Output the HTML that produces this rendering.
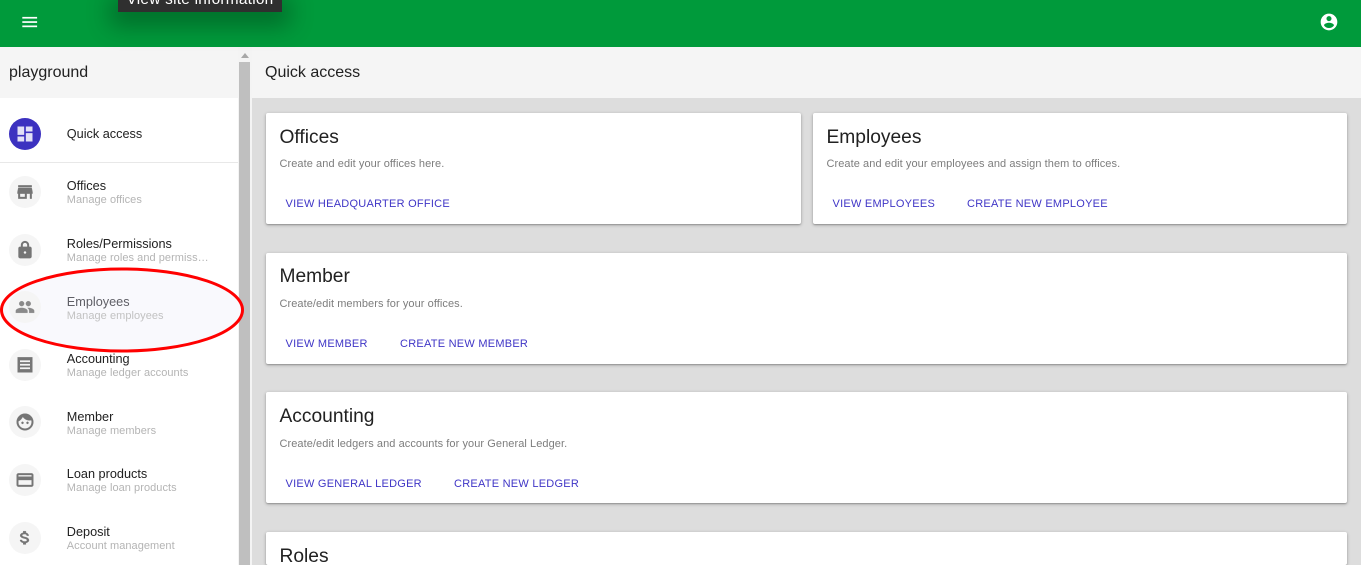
<!DOCTYPE html>
<html><head><meta charset="utf-8"><style>
*{box-sizing:border-box}
html,body{margin:0;padding:0;width:1361px;height:565px;overflow:hidden;background:#ddd;font-family:"Liberation Sans",sans-serif;color:#212121}
#root{position:absolute;left:0;top:0;width:1361px;height:565px;overflow:hidden;background:#ddd}
.abs{position:absolute}
.hdr{left:0;top:0;width:1361px;height:47px;background:#009a3b}
.tip{left:118px;top:0;width:164px;height:12px;background:#2f2f2f;box-shadow:0 6px 24px 8px rgba(0,0,0,.3);z-index:5;overflow:hidden}
.tip span{position:absolute;left:0;top:-13px;width:164px;color:#fff;font-size:15.4px;line-height:25px;text-align:center;letter-spacing:.25px;white-space:nowrap}
.side{left:0;top:47px;width:238px;height:518px;background:#fff}
.sh{left:0;top:47px;width:238px;height:51px;background:#f5f5f5;font-size:16px;line-height:51px;padding-left:9px}
.track{left:238px;top:47px;width:14px;height:518px;background:#f4f4f4}
.thumb{left:239px;top:62px;width:11px;height:503px;background:#bfbfbf}
.arrow{left:240.7px;top:52.5px;width:0;height:0;border-left:4px solid transparent;border-right:4px solid transparent;border-bottom:5px solid #a8a8a8}
.mh{left:252px;top:47px;width:1109px;height:51px;background:#f5f5f5;font-size:16px;line-height:51px;padding-left:13px}
.circ{left:9px;width:32px;height:32px;border-radius:50%;background:#f5f5f5}
.circ svg{position:absolute;left:6px;top:6px;width:20px;height:20px;fill:#757575}
.t{left:66.8px;font-size:12.7px;line-height:15px;white-space:nowrap;color:#212121}
.s{left:66.8px;font-size:11px;line-height:13px;white-space:nowrap;color:#b4b4b4;letter-spacing:.05px}
.card{background:#fff;border-radius:2px;box-shadow:0 1px 3px rgba(0,0,0,.3),0 1px 1px rgba(0,0,0,.14)}
.card h2{position:absolute;left:13.5px;top:13.4px;margin:0;font-weight:400;font-size:19.2px;line-height:22px;color:#212121}
.card p{position:absolute;left:13.5px;top:44px;margin:0;font-size:11px;line-height:14px;color:#7d7d7d;white-space:nowrap;letter-spacing:.07px}
.card a{position:absolute;top:84px;font-size:11px;line-height:14px;color:#3f35c6;white-space:nowrap;letter-spacing:.25px}
</style></head><body>
<div id="root">
<div class="abs hdr"></div>
<svg class="abs" style="left:22px;top:16px" width="16" height="12" viewBox="0 0 16 12" fill="#fff"><rect x=".3" y=".9" width="14.8" height="1.7"/><rect x=".3" y="5.2" width="14.8" height="1.7"/><rect x=".3" y="9.5" width="14.8" height="1.7"/></svg>
<svg class="abs" style="left:1318.5px;top:12px" width="20" height="20" viewBox="0 0 24 24" fill="#fff"><path d="M12 2C6.48 2 2 6.48 2 12s4.48 10 10 10 10-4.48 10-10S17.52 2 12 2zm0 3c1.66 0 3 1.34 3 3s-1.34 3-3 3-3-1.34-3-3 1.34-3 3-3zm0 14.2c-2.5 0-4.71-1.28-6-3.22.03-1.99 4-3.08 6-3.08 1.99 0 5.97 1.09 6 3.08-1.29 1.94-3.5 3.22-6 3.22z"/></svg>
<div class="abs tip"><span>View site information</span></div>

<div class="abs side"></div>
<div class="abs sh">playground</div>
<div class="abs track"></div>
<div class="abs thumb"></div>
<div class="abs arrow"></div>
<div class="abs mh">Quick access</div>

<div class="abs" style="left:0;top:162px;width:238px;height:1px;background:#e8e8e8"></div>

<div class="abs circ" style="top:118px;background:#3c31c0"><svg viewBox="0 0 24 24" style="fill:#e2e0f6"><path d="M3 13h8V3H3v10zm0 8h8v-6H3v6zm10 0h8V11h-8v10zm0-18v6h8V3h-8z"/></svg></div>
<div class="abs t" style="top:127px">Quick access</div>

<svg class="abs" style="left:0;top:265px;z-index:1" width="250" height="90" viewBox="0 0 250 90"><ellipse cx="122" cy="45" rx="120.5" ry="41" fill="#f9f9fd" stroke="#f00" stroke-width="3"/></svg>

<div class="abs circ" style="top:176px"><svg viewBox="0 0 24 24" stroke="#757575" stroke-width=".4"><path d="M20 4H4v2h16V4zm1 10v-2l-1-5H4l-1 5v2h1v6h10v-6h4v6h2v-6h1zm-9 4H6v-4h6v4z"/></svg></div>
<div class="abs t" style="top:179px">Offices</div>
<div class="abs s" style="top:194px">Manage offices</div>

<div class="abs circ" style="top:234px"><svg viewBox="0 0 24 24"><path fill-rule="evenodd" d="M18 8h-1V6c0-2.76-2.24-5-5-5S7 3.24 7 6v2H6c-1.1 0-2 .9-2 2v10c0 1.1.9 2 2 2h12c1.1 0 2-.9 2-2V10c0-1.1-.9-2-2-2zm-6 8.5c-.83 0-1.5-.67-1.5-1.5s.67-1.5 1.5-1.5 1.5.67 1.5 1.5-.67 1.5-1.5 1.5zm2.6-8.5H9.4V6c0-1.44 1.16-2.6 2.6-2.6 1.44 0 2.6 1.16 2.6 2.6v2z"/></svg></div>
<div class="abs t" style="top:237px">Roles/Permissions</div>
<div class="abs s" style="top:252px">Manage roles and permiss…</div>

<div class="abs circ" style="top:291px;z-index:2"><svg viewBox="0 0 24 24" style="fill:#8a8a8a" stroke="#8a8a8a" stroke-width=".3"><path d="M16 11c1.66 0 2.99-1.34 2.99-3S17.66 5 16 5c-1.66 0-3 1.34-3 3s1.34 3 3 3zm-8 0c1.66 0 2.99-1.34 2.99-3S9.66 5 8 5C6.34 5 5 6.34 5 8s1.34 3 3 3zm0 2c-2.33 0-7 1.17-7 3.5V19h14v-2.5c0-2.33-4.67-3.5-7-3.5zm8 0c-.29 0-.62.02-.97.05 1.16.84 1.97 1.97 1.97 3.45V19h6v-2.5c0-2.33-4.67-3.5-7-3.5z"/></svg></div>
<div class="abs t" style="top:295px;z-index:2;color:#5f5f66">Employees</div>
<div class="abs s" style="top:310px;z-index:2;color:#c2c2c2">Manage employees</div>

<div class="abs circ" style="top:349px"><svg viewBox="0 0 24 24"><path fill-rule="evenodd" d="M3 2.5h18v18.5H3z M6 6.5v2h12v-2z M6 10.7v2h12v-2z M6 14.9v2h12v-2z"/></svg></div>
<div class="abs t" style="top:352px;z-index:2">Accounting</div>
<div class="abs s" style="top:367px">Manage ledger accounts</div>

<div class="abs circ" style="top:406px"><svg viewBox="0 0 24 24" stroke="#757575" stroke-width=".45"><path d="M9 11.75c-.69 0-1.25.56-1.25 1.25s.56 1.25 1.25 1.25 1.25-.56 1.25-1.25-.56-1.25-1.25-1.25zm6 0c-.69 0-1.25.56-1.25 1.25s.56 1.25 1.25 1.25 1.25-.56 1.25-1.25-.56-1.25-1.25-1.25zM12 2C6.48 2 2 6.48 2 12s4.48 10 10 10 10-4.48 10-10S17.52 2 12 2zm0 18c-4.41 0-8-3.59-8-8 0-.29.02-.58.05-.86 2.36-1.05 4.23-2.98 5.21-5.37C11.07 8.33 14.05 10 17.42 10c.78 0 1.53-.09 2.25-.26.21.71.33 1.47.33 2.26 0 4.41-3.59 8-8 8z"/></svg></div>
<div class="abs t" style="top:410px">Member</div>
<div class="abs s" style="top:425px">Manage members</div>

<div class="abs circ" style="top:464px"><svg viewBox="0 0 24 24" stroke="#757575" stroke-width=".4"><path d="M20 4H4c-1.11 0-1.99.89-1.99 2L2 18c0 1.11.89 2 2 2h16c1.11 0 2-.89 2-2V6c0-1.11-.89-2-2-2zm0 14H4v-6h16v6zm0-10H4V6h16v2z"/></svg></div>
<div class="abs t" style="top:467px">Loan products</div>
<div class="abs s" style="top:482px">Manage loan products</div>

<div class="abs circ" style="top:522px"><svg viewBox="0 0 24 24" stroke="#757575" stroke-width=".5"><path transform="translate(-.6 1.2) scale(1.05 .88)" d="M11.8 10.9c-2.27-.59-3-1.2-3-2.15 0-1.09 1.01-1.85 2.7-1.85 1.78 0 2.44.85 2.5 2.1h2.21c-.07-1.72-1.12-3.3-3.21-3.81V3h-3v2.16c-1.94.42-3.5 1.68-3.5 3.61 0 2.31 1.91 3.46 4.7 4.13 2.5.6 3 1.48 3 2.41 0 .69-.49 1.79-2.7 1.79-2.06 0-2.87-.92-2.98-2.1h-2.2c.12 2.19 1.76 3.42 3.68 3.83V21h3v-2.15c1.95-.37 3.5-1.5 3.5-3.55 0-2.84-2.43-3.81-4.7-4.4z"/></svg></div>
<div class="abs t" style="top:525px">Deposit</div>
<div class="abs s" style="top:540px">Account management</div>

<div class="abs card" style="left:266px;top:113px;width:535px;height:111px">
<h2 style="top:14px">Offices</h2><p>Create and edit your offices here.</p>
<a style="left:19.5px">VIEW HEADQUARTER OFFICE</a></div>
<div class="abs card" style="left:813px;top:113px;width:534px;height:111px">
<h2 style="top:14px">Employees</h2><p>Create and edit your employees and assign them to offices.</p>
<a style="left:19.5px">VIEW EMPLOYEES</a><a style="left:154px">CREATE NEW EMPLOYEE</a></div>
<div class="abs card" style="left:266px;top:253px;width:1081px;height:111px">
<h2>Member</h2><p>Create/edit members for your offices.</p>
<a style="left:19.5px">VIEW MEMBER</a><a style="left:134px">CREATE NEW MEMBER</a></div>
<div class="abs card" style="left:266px;top:392px;width:1081px;height:111px">
<h2 style="top:13.6px">Accounting</h2><p style="top:45px">Create/edit ledgers and accounts for your General Ledger.</p>
<a style="left:19.5px;top:85px">VIEW GENERAL LEDGER</a><a style="left:188px;top:85px">CREATE NEW LEDGER</a></div>
<div class="abs card" style="left:266px;top:532px;width:1081px;height:33px">
<h2 style="height:18px;overflow:hidden;line-height:20px;top:15px">Roles</h2></div>
</div>
</body></html>
